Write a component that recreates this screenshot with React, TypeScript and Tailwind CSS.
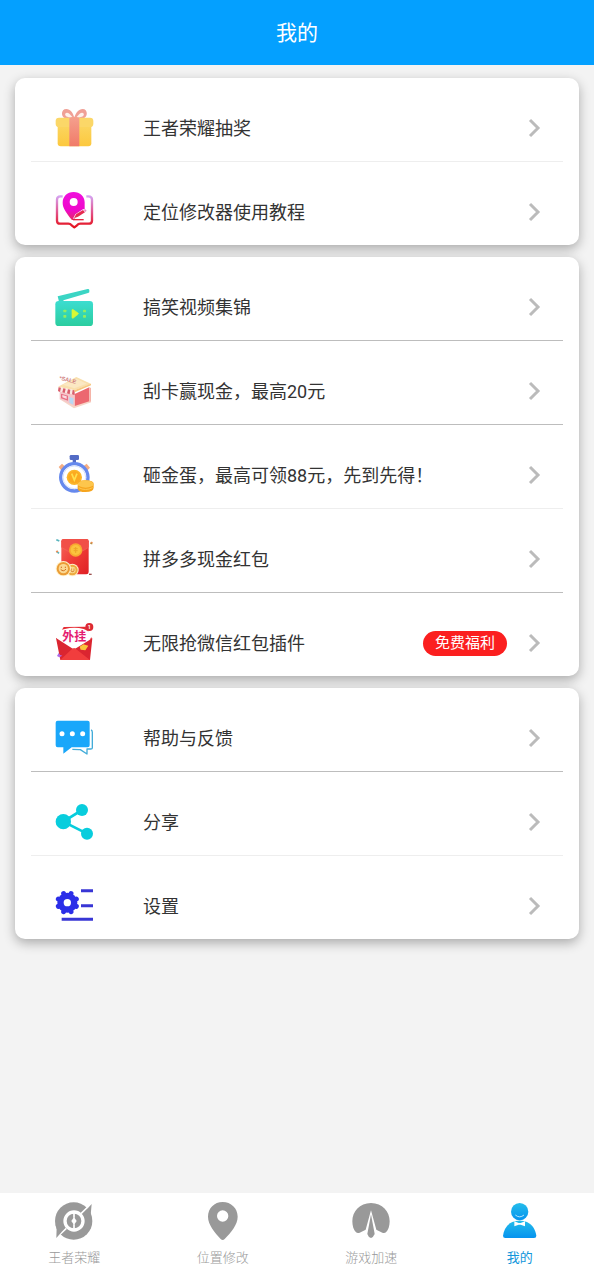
import type { ReactNode } from "react";

type Item = {
  label: string;
  icon: ReactNode;
  badge?: string;
  faint?: boolean;
};

const iconClass = "size-10 shrink-0";

const GiftIcon = () => (
  <svg viewBox="30 39 120 120" className={iconClass} aria-hidden="true">
    <defs>
      <linearGradient id="gift-box" x1="0" y1="0" x2="0" y2="1">
        <stop offset="0" stopColor="#fbd764" />
        <stop offset="1" stopColor="#fcc83e" />
      </linearGradient>
      <linearGradient id="gift-ribbon" x1="0" y1="0" x2="0" y2="1">
        <stop offset="0" stopColor="#f5a08e" />
        <stop offset="1" stopColor="#f07b68" />
      </linearGradient>
    </defs>
    <path d="M86 70C79 62 72 70 62 70C47 67 47 42 64 42C76 42 84 53 88 69C92 53 101 42 113 42C129 42 130 67 114 70C104 70 97 63 90 70Z" fill="#f0a096" />
    <path d="M82 66C75 66 65 68 61 61C58 54 66 50 73 56Z" fill="#fdf1ec" />
    <path d="M95 66C102 66 112 68 116 61C119 54 111 50 104 56Z" fill="#fdf1ec" />
    <path d="M38 82H139V145Q139 154 130 154H47Q38 154 38 145Z" fill="url(#gift-box)" />
    <rect x="32" y="68" width="113" height="28" rx="10" fill="#fbd768" />
    <path d="M73 68Q88 62 103 68V154H73Z" fill="url(#gift-ribbon)" />
  </svg>
);

const GuideIcon = () => (
  <svg viewBox="30 36 120 120" className={iconClass} aria-hidden="true">
    <defs>
      <linearGradient id="guide-book" x1="0" y1="0" x2="0" y2="1">
        <stop offset="0" stopColor="#d5a2ef" />
        <stop offset=".5" stopColor="#e2548f" />
        <stop offset="1" stopColor="#e5121c" />
      </linearGradient>
      <linearGradient id="guide-pin" x1="0" y1="0" x2="0" y2="1">
        <stop offset="0" stopColor="#f010dd" />
        <stop offset=".65" stopColor="#ef08ca" />
        <stop offset="1" stopColor="#e52b62" />
      </linearGradient>
    </defs>
    <path d="M53 49H46Q36 49 36 59V122Q36 131 46 131H70Q76 131 80 136L88 142L96 136Q100 131 106 131H130Q141 131 141 122V59Q141 49 130 49H124" fill="none" stroke="url(#guide-book)" strokeWidth="7" strokeLinejoin="round" />
    <path d="M86 36C66 36 53 50 53 68C53 84 63 97 80 119Q86 122 91 114L119 88V67C119 49 105 36 86 36Z" fill="url(#guide-pin)" />
    <circle cx="86" cy="66" r="12" fill="#fff" />
    <path d="M84 116L91 103L115 87L125 94L104 112Z" fill="#fff" />
    <path d="M87 115L93 103L114 90L120 97L99 110Z" fill="#e52b50" />
    <path d="M117 91L121 88L125 92L121 96Z" fill="#e98ac2" />
    <path d="M84 119H116" stroke="#e42540" strokeWidth="4" />
  </svg>
);

const VideoIcon = () => (
  <svg viewBox="30 27 120 120" className={iconClass} aria-hidden="true">
    <defs>
      <linearGradient id="video-body" x1="0" y1="0" x2="0" y2="1">
        <stop offset="0" stopColor="#3cddd0" />
        <stop offset="1" stopColor="#2bcd9f" />
      </linearGradient>
    </defs>
    <path d="M41 67L38 55L128 33Q132 32 133 36V41Q134 44 129 45L58 66L50 71H41Z" fill="#3bd5c4" />
    <rect x="31" y="69" width="113" height="75" rx="10" fill="url(#video-body)" />
    <path d="M81 96Q81 93 85 95L99 105Q102 107 99 109L85 120Q81 122 81 118Z" fill="#d9f935" stroke="#d9f935" strokeWidth="2" />
    <g fill="#91ee61">
      <rect x="55" y="95" width="9" height="8" rx="2" />
      <rect x="55" y="111" width="9" height="8" rx="2" />
      <rect x="114" y="95" width="9" height="8" rx="2" />
      <rect x="114" y="111" width="9" height="8" rx="2" />
    </g>
  </svg>
);

const ShopIcon = () => (
  <svg viewBox="30 27 120 120" className={iconClass} aria-hidden="true">
    <path d="M43 111L87 139L139 121L98 99Z" fill="#f6d6c8" />
    <path d="M89 96L133 76V118L89 132Z" fill="#ec6870" />
    <path d="M133 76L138 78V119L133 119Z" fill="#f5b4a8" />
    <path d="M44 83L89 96V132L44 111Z" fill="#f5c6c9" />
    <path d="M48 95L69 101V116L48 109Z" fill="#e76f83" />
    <path d="M52 99L65 103V111L52 106Z" fill="#fadbe0" />
    <path d="M73 105L85 109V128L73 122Z" fill="#b8d8f4" />
    <path d="M39 74L94 45L139 66L88 85Z" fill="#f9dfad" />
    <path d="M54 68L94 50L125 65L88 79Z" fill="#fbe8c3" />
    <path d="M39 75L88 85L89 98L39 88Z" fill="#fbe8e4" />
    <path d="M41 76L48 77L45 90L39 87ZM55 79L62 80L59 93L52 91ZM69 82L76 83L74 97L66 94ZM83 84L89 85V100L81 97Z" fill="#d95e6c" />
    <path d="M88 85L138 65V70L89 91Z" fill="#f7c780" />
    <text x="42" y="53" transform="rotate(14 42 53)" fontFamily="Liberation Sans, sans-serif" fontSize="17" fontWeight="700" fill="#d07f80">*SALE</text>
  </svg>
);

const TimerIcon = () => (
  <svg viewBox="30 30 120 120" className={iconClass} aria-hidden="true">
    <path d="M41 66L51 56L61 65L50 78ZM115 64L125 56L135 68L126 77Z" fill="#f5ae83" />
    <rect x="74" y="30" width="28" height="15" rx="4" fill="#536bc5" />
    <rect x="83" y="42" width="10" height="14" fill="#536bc5" />
    <circle cx="88" cy="97" r="41" fill="#fff" stroke="#6689ed" strokeWidth="10" />
    <circle cx="88" cy="97" r="34" fill="none" stroke="#d8e1fb" strokeWidth="3" />
    <circle cx="88" cy="97" r="23" fill="#fcb62a" />
    <circle cx="88" cy="97" r="18" fill="#fbaa20" />
    <path d="M80 86L88 105L96 86" fill="none" stroke="#ffe04e" strokeWidth="5" />
    <path d="M98 115Q98 106 122 106T146 117V128Q145 141 122 141T98 131Z" fill="#f6a51e" />
    <ellipse cx="122" cy="117" rx="24" ry="11" fill="#fdc64c" />
    <path d="M101 128Q121 139 143 128" fill="none" stroke="#ffc84f" strokeWidth="3" />
  </svg>
);

const PacketIcon = () => (
  <svg viewBox="30 27 120 120" className={iconClass} aria-hidden="true">
    <defs>
      <linearGradient id="packet-body" x1="0" y1="0" x2="1" y2="1">
        <stop offset="0" stopColor="#f4675b" />
        <stop offset=".5" stopColor="#ef3b36" />
        <stop offset="1" stopColor="#df1f25" />
      </linearGradient>
    </defs>
    <path d="M34 29L43 33M35 64L42 70" stroke="#5ab5be" strokeWidth="5" />
    <path d="M38 62L34 67M137 41L142 36" stroke="#f28c4f" strokeWidth="5" />
    <path d="M136 39L142 42" stroke="#b39145" strokeWidth="4" />
    <rect x="49" y="27" width="82" height="106" rx="7" fill="url(#packet-body)" />
    <path d="M49 34Q49 27 56 27H124Q131 27 131 34V51Q91 84 49 51Z" fill="#f15048" />
    <path d="M49 52Q91 84 131 52" fill="none" stroke="#f56659" strokeWidth="2" />
    <circle cx="92" cy="60" r="20" fill="#f8a931" />
    <circle cx="92" cy="60" r="15" fill="#fbc33d" />
    <path d="M92 51V69M86 56H98M86 62H98" stroke="#eda52a" strokeWidth="3" />
    <circle cx="82" cy="120" r="19" fill="#fff0c8" />
    <circle cx="82" cy="120" r="16" fill="#edaa3f" />
    <circle cx="82" cy="120" r="10" fill="#f9d88c" />
    <circle cx="55" cy="116" r="23" fill="#fff0c8" />
    <circle cx="55" cy="116" r="20" fill="#eb9c35" />
    <circle cx="55" cy="116" r="14" fill="#fbd993" />
    <path d="M49 110V114M61 110V114M47 118Q55 127 63 117M79 116V119M87 116V119M77 122Q83 128 88 122" fill="none" stroke="#d0701f" strokeWidth="3" />
    <path d="M132 133H140" stroke="#9b514f" strokeWidth="4" />
  </svg>
);

const PluginIcon = () => (
  <svg viewBox="30 33 120 120" className={iconClass} aria-hidden="true">
    <path d="M34 80L56 45L122 44L141 80L88 110Z" fill="#e52d35" />
    <path d="M32 74Q38 54 60 51Q88 43 116 51Q134 57 140 73L128 96L97 109H79L44 93Z" fill="#fff" />
    <path d="M33 78L81 109Q87 113 93 109L142 79L135 144H46Z" fill="#db2530" />
    <path d="M46 144L80 112Q87 106 94 112L135 144Z" fill="#f13d3d" />
    <path d="M104 104L115 97L130 101L121 115L107 113Z" fill="#fac43b" />
    <path d="M36 132L41 123L45 129L52 131L43 136Z" fill="#ad6ae7" />
    <text x="88" y="87" textAnchor="middle" fontFamily="Noto Sans CJK SC, sans-serif" fontSize="36" fontWeight="700" fill="#e51b70">外挂</text>
    <circle cx="133" cy="45" r="12" fill="#dd2a33" />
    <text x="133" y="51" textAnchor="middle" fontFamily="Roboto, sans-serif" fontSize="16" fontWeight="700" fill="#fff">1</text>
  </svg>
);

const ChatIcon = () => (
  <svg viewBox="30 30 120 120" className={iconClass} aria-hidden="true">
    <path d="M138 66Q142 67 142 73V120Q142 123 137 123H126V138L106 125Q100 124 82 124" fill="none" stroke="#43acd9" strokeWidth="4" strokeLinejoin="round" />
    <path d="M38 38H128Q134 38 134 44V112Q134 118 128 118H80L55 137V118H38Q32 118 32 112V44Q32 38 38 38Z" fill="#1aa7fa" />
    <g fill="#fff">
      <circle cx="51" cy="77" r="7.5" />
      <circle cx="82" cy="77" r="7.5" />
      <circle cx="113" cy="77" r="7.5" />
    </g>
  </svg>
);

const ShareIcon = () => (
  <svg viewBox="30 282 120 120" className={iconClass} aria-hidden="true">
    <path d="M111 306L55 341L126 377" fill="none" stroke="#08cddd" strokeWidth="8" />
    <g fill="#08cddd">
      <circle cx="55" cy="341" r="23" />
      <circle cx="111" cy="306" r="18" />
      <circle cx="126" cy="377" r="18" />
    </g>
  </svg>
);

const SettingsIcon = () => (
  <svg viewBox="30 534 120 120" className={iconClass} aria-hidden="true">
    <circle cx="67" cy="584" r="30" fill="#2b2ee8" />
    <path d="M56 557L78 611M78 557L56 611M40 573L94 595M40 595L94 573" stroke="#2b2ee8" strokeWidth="15" strokeLinecap="round" />
    <circle cx="67" cy="584" r="11" fill="#fff" />
    <path d="M108 548H144M108 593H144M50 634H144" stroke="#3836d5" strokeWidth="9" />
  </svg>
);

const HonorIcon = () => (
  <svg viewBox="163 63 120 120" className={iconClass} aria-hidden="true">
    <circle cx="222" cy="123" r="56" fill="#999" />
    <path d="M244 101L272 74M171 172L200 145" stroke="#fff" strokeWidth="5" />
    <path d="M276 72L273 104L278 114L262 90L248 103Z" fill="#999" />
    <path d="M170 174L171 142L166 132L183 156L197 143Z" fill="#999" />
    <circle cx="223" cy="123" r="27" fill="#999" stroke="#fff" strokeWidth="10" />
    <path d="M223 98V113M223 133V148" stroke="#fff" strokeWidth="5" />
    <path d="M223 111L231 123L223 135L215 123Z" fill="#fff" />
  </svg>
);

const PinIcon = () => (
  <svg viewBox="608 63 120 120" className={iconClass} aria-hidden="true">
    <path fillRule="evenodd" d="M667 66C642 66 623 85 623 110C623 134 643 157 661 177Q667 183 673 177C692 157 712 134 712 110C712 85 692 66 667 66ZM667 91A17 17 0 1 1 667 125A17 17 0 1 1 667 91Z" fill="#999" />
  </svg>
);

const SpeedIcon = () => (
  <svg viewBox="154 63 120 120" className={iconClass} aria-hidden="true">
    <path d="M214 69C180 69 158 94 158 124C158 138 162 150 169 157Q174 161 180 158L198 149L214 91L230 149L248 158Q254 161 259 157C266 150 270 138 270 124C270 94 248 69 214 69Z" fill="#999" />
    <path d="M214 103L225 162Q221 172 214 174Q206 172 203 162Z" fill="#999" />
  </svg>
);

const MeIcon = () => (
  <svg viewBox="599 63 120 120" className={iconClass} aria-hidden="true">
    <defs>
      <linearGradient id="me-fill" x1="0" y1="0" x2="0" y2="1">
        <stop offset="0" stopColor="#24bdea" />
        <stop offset="1" stopColor="#0693ef" />
      </linearGradient>
    </defs>
    <circle cx="658" cy="95" r="26" fill="url(#me-fill)" />
    <path d="M645 105Q658 116 671 105" fill="none" stroke="#d8f2fc" strokeWidth="2.5" />
    <path d="M636 126Q658 117 680 126C697 134 706 151 708 167Q708 174 701 174H615Q608 174 608 167C610 151 619 134 636 126Z" fill="url(#me-fill)" />
    <path d="M642 124L655 129H661L674 124V139L661 134H655L642 139Z" fill="#fff" />
  </svg>
);

const Chevron = () => (
  <svg viewBox="0 0 14 20" className="h-5 w-3.5 shrink-0" aria-hidden="true">
    <path d="M3 2L11 10L3 18" fill="none" stroke="#bbb" strokeWidth="3" />
  </svg>
);

const groups: Item[][] = [
  [
    { label: "王者荣耀抽奖", icon: <GiftIcon />, faint: true },
    { label: "定位修改器使用教程", icon: <GuideIcon /> },
  ],
  [
    { label: "搞笑视频集锦", icon: <VideoIcon /> },
    { label: "刮卡赢现金，最高20元", icon: <ShopIcon /> },
    { label: "砸金蛋，最高可领88元，先到先得！", icon: <TimerIcon />, faint: true },
    { label: "拼多多现金红包", icon: <PacketIcon /> },
    { label: "无限抢微信红包插件", icon: <PluginIcon />, badge: "免费福利" },
  ],
  [
    { label: "帮助与反馈", icon: <ChatIcon /> },
    { label: "分享", icon: <ShareIcon />, faint: true },
    { label: "设置", icon: <SettingsIcon /> },
  ],
];

const tabs = [
  { label: "王者荣耀", icon: <HonorIcon /> },
  { label: "位置修改", icon: <PinIcon /> },
  { label: "游戏加速", icon: <SpeedIcon /> },
  { label: "我的", icon: <MeIcon />, active: true },
];

function MenuRow({ item }: { item: Item }) {
  return (
    <li className={`border-b last:border-b-0 ${item.faint ? "border-[#eeeeee]" : "border-[#bdbdbd]"}`}>
      <button type="button" className="flex w-full items-center pt-[30px] pr-[22px] pb-[13px] pl-6 text-left">
        {item.icon}
        <span className="ml-12 flex-1 pt-0.5 text-[18px] leading-6 text-[#333]">{item.label}</span>
        {item.badge && (
          <span className="mr-5 rounded-full bg-[#fb1f1f] px-3 text-[15px] leading-[25px] text-white">{item.badge}</span>
        )}
        <Chevron />
      </button>
    </li>
  );
}

export default function App() {
  return (
    <div className="flex min-h-screen flex-col bg-[#f3f3f3] font-[Roboto,'Noto_Sans_CJK_SC',sans-serif]">
      <header className="bg-[#04a0ff] pt-[17px] pb-[15px] text-center text-white">
        <h1 className="text-[21px] leading-[33px]">我的</h1>
      </header>
      <main className="flex flex-1 flex-col gap-3 px-[15px] py-[13px]">
        {groups.map((items, index) => (
          <ul key={index} className="rounded-[10px] bg-white px-4 shadow-[0_4px_12px_rgba(0,0,0,0.3)]">
            {items.map((item) => (
              <MenuRow key={item.label} item={item} />
            ))}
          </ul>
        ))}
      </main>
      <nav className="grid grid-cols-4 bg-white pt-2 pb-3">
        {tabs.map((tab) => (
          <button
            key={tab.label}
            type="button"
            aria-current={tab.active ? "page" : undefined}
            className={`flex flex-col items-center gap-[7px] text-[13px] leading-5 ${tab.active ? "font-normal text-[#1296db]" : "font-light text-[#999]"}`}
          >
            {tab.icon}
            <span>{tab.label}</span>
          </button>
        ))}
      </nav>
    </div>
  );
}
